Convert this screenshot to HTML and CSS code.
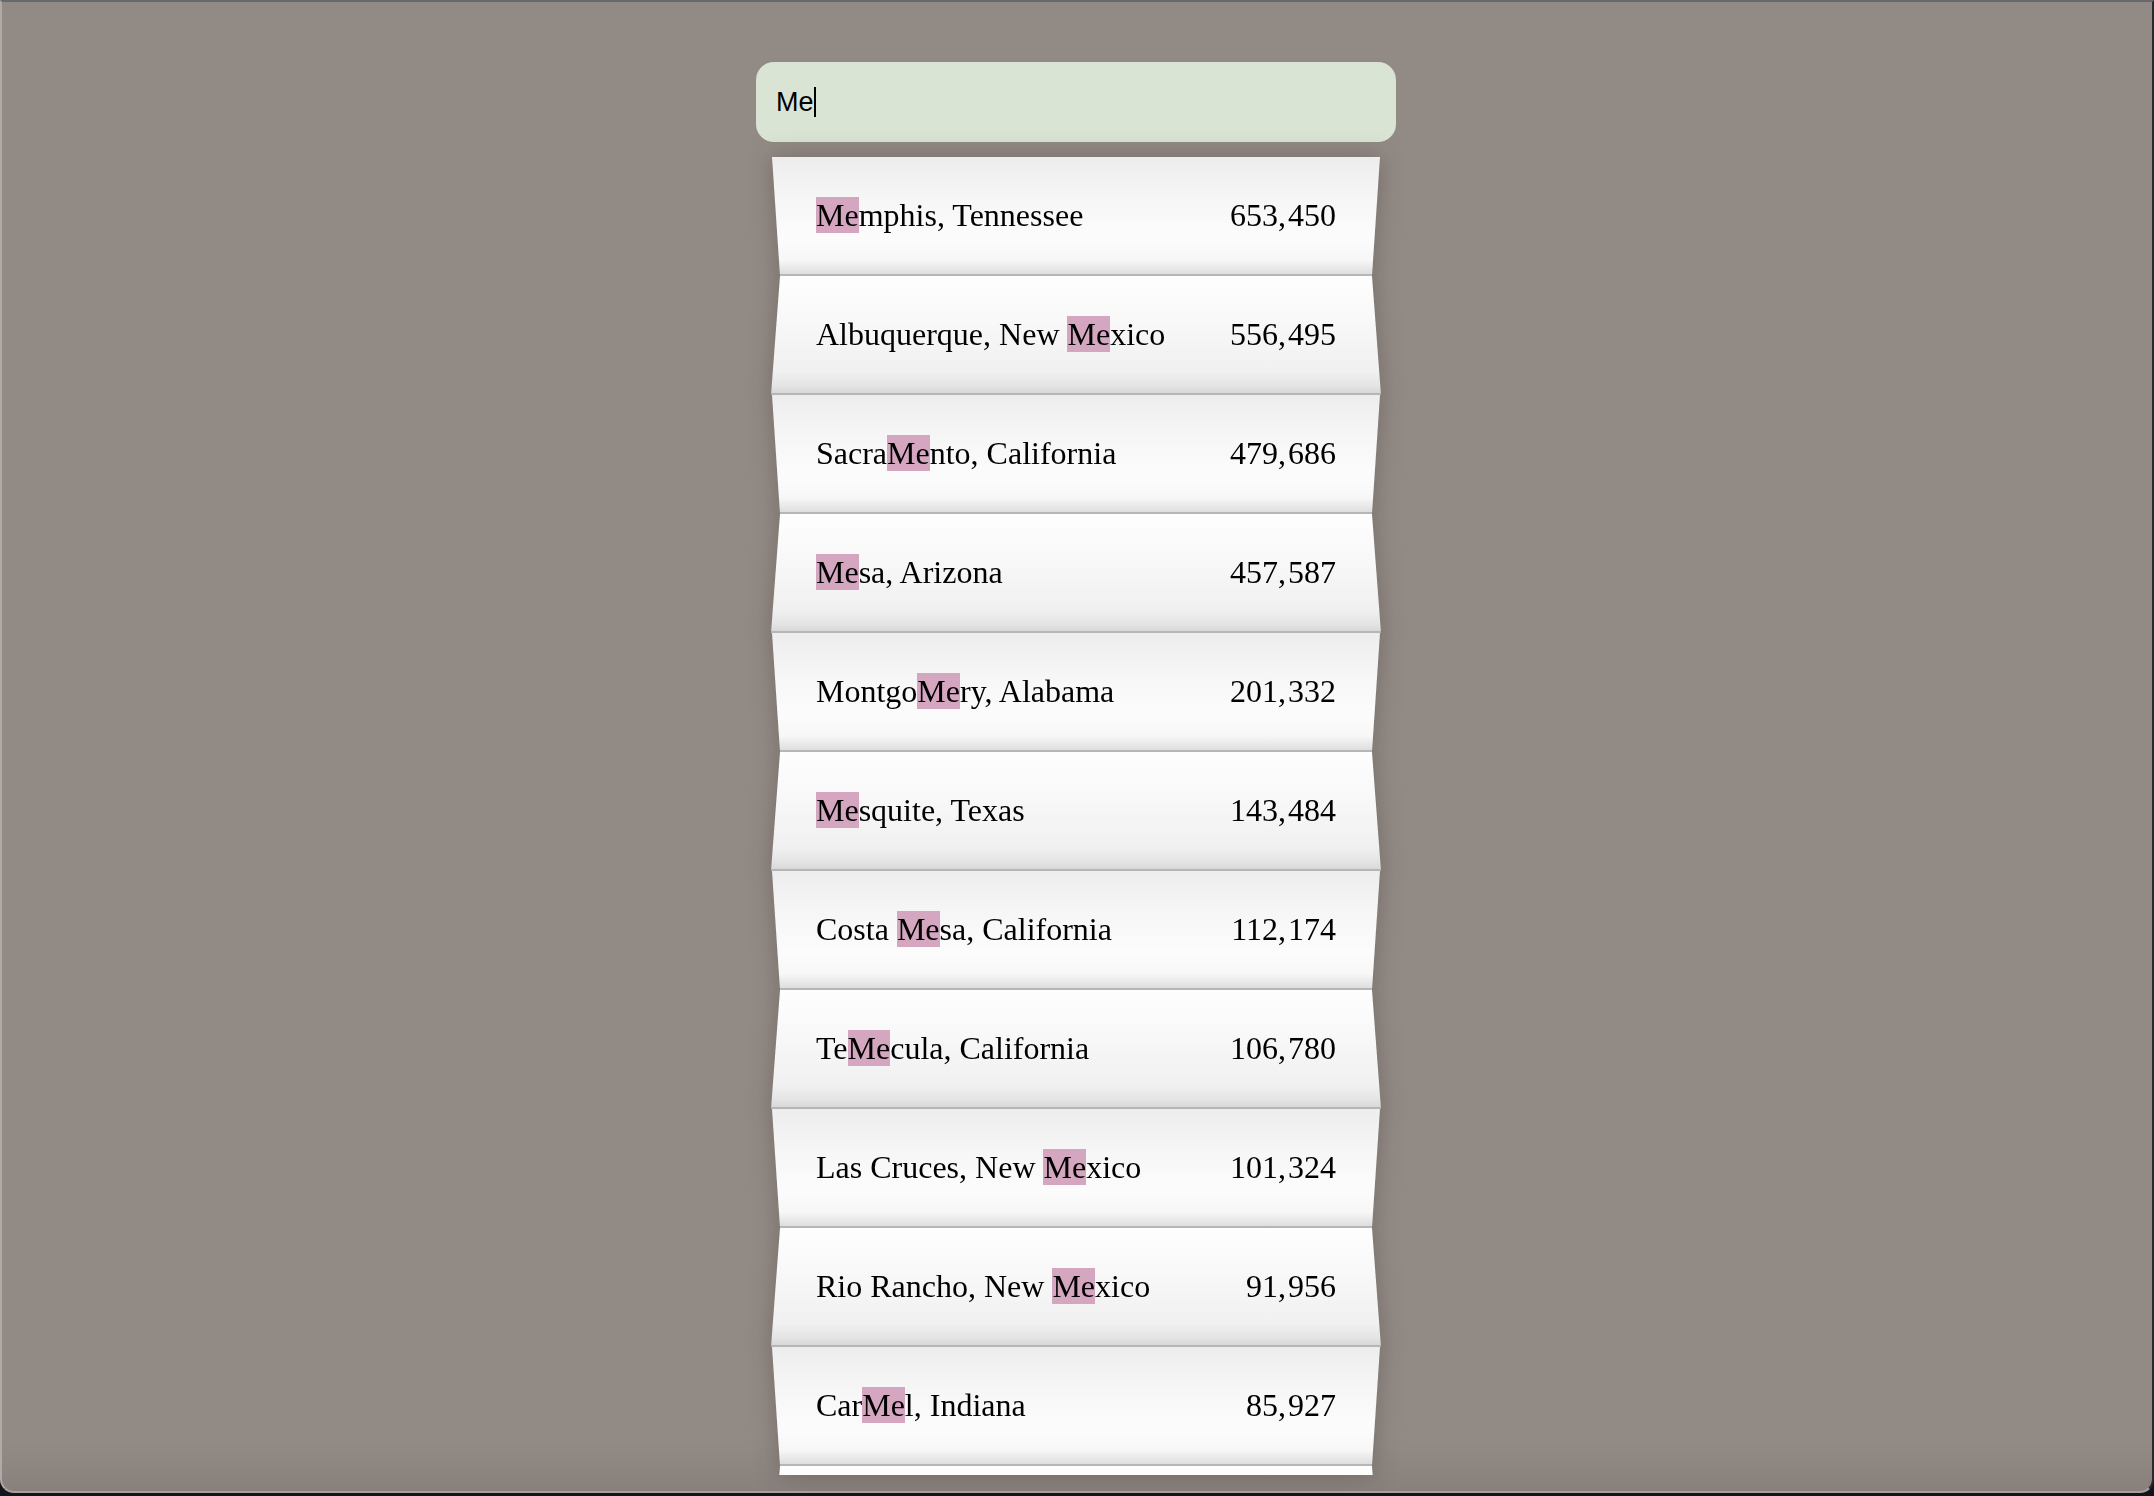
FILE: index.html
```html
<!DOCTYPE html>
<html lang="en">
<head>
<meta charset="utf-8">
<title>City search</title>
<link rel="stylesheet" href="styles.css">
</head>
<body>
<div class="window">
  <main class="search">
    <div class="search-box"><span class="query">Me</span><span class="caret"></span></div>
    <div class="results-wrap">
      <ul class="results">
        <li class="row"><span class="name"><mark>Me</mark>mphis, Tennessee</span><span class="pop">653, 450</span></li>
        <li class="row"><span class="name">Albuquerque, New <mark>Me</mark>xico</span><span class="pop">556, 495</span></li>
        <li class="row"><span class="name">Sacra<mark>Me</mark>nto, California</span><span class="pop">479, 686</span></li>
        <li class="row"><span class="name"><mark>Me</mark>sa, Arizona</span><span class="pop">457, 587</span></li>
        <li class="row"><span class="name">Montgo<mark>Me</mark>ry, Alabama</span><span class="pop">201, 332</span></li>
        <li class="row"><span class="name"><mark>Me</mark>squite, Texas</span><span class="pop">143, 484</span></li>
        <li class="row"><span class="name">Costa <mark>Me</mark>sa, California</span><span class="pop">112, 174</span></li>
        <li class="row"><span class="name">Te<mark>Me</mark>cula, California</span><span class="pop">106, 780</span></li>
        <li class="row"><span class="name">Las Cruces, New <mark>Me</mark>xico</span><span class="pop">101, 324</span></li>
        <li class="row"><span class="name">Rio Rancho, New <mark>Me</mark>xico</span><span class="pop">91, 956</span></li>
        <li class="row"><span class="name">Car<mark>Me</mark>l, Indiana</span><span class="pop">85, 927</span></li>
        <li class="row row-hidden" aria-hidden="true"></li>
      </ul>
    </div>
  </main>
</div>
</body>
</html>
```

FILE: styles.css
```css
html {
  background: #14141c;
}
body {
  margin: 0;
  height: 1496px;
  overflow: hidden;
}
.window {
  box-sizing: border-box;
  height: 1493px;
  padding-right: 2px;
  background: linear-gradient(to bottom, rgba(0,0,0,0) 0, rgba(0,0,0,0) 1440px, rgba(0,0,0,0.07) 100%), #928a85;
  border-top: 2px solid #66686c;
  border-left: 2px solid #b1a9a5;
  border-right: 2px solid #2a2a2e;
  border-bottom: 2px solid #a8a09c;
  border-radius: 0 0 14px 14px;
  overflow: hidden;
}
.search {
  width: 640px;
  margin: 0 auto;
  padding-top: 60px;
  display: flex;
  flex-direction: column;
  align-items: center;
}
.search-box {
  box-sizing: border-box;
  width: 640px;
  height: 80px;
  border-radius: 18px;
  background: #d9e4d5;
  display: flex;
  align-items: center;
  padding: 0 20px;
  font-family: "Liberation Sans", Arial, sans-serif;
  font-size: 27px;
  color: #000;
}
.caret {
  display: inline-block;
  width: 2px;
  height: 30px;
  background: #000;
}
.results-wrap {
  margin-top: 15px;
  width: 610px;
  filter: drop-shadow(0 0 12px rgba(40, 30, 25, 0.28));
}
.results {
  list-style: none;
  margin: 0;
  padding: 0;
  height: 1318px;
  overflow: hidden;
}
.row {
  box-sizing: border-box;
  height: 119px;
  padding: 0 45px;
  display: flex;
  justify-content: space-between;
  align-items: center;
  font-family: "Liberation Serif", "Times New Roman", serif;
  font-size: 32px;
  color: #000;
  border-bottom: 2px solid #b6b6b6;
}
.pop {
  word-spacing: -6px;
}
.row:nth-child(odd) {
  clip-path: polygon(1px 0, calc(100% - 1px) 0, calc(100% - 9px) 100%, 9px 100%);
  background: linear-gradient(to bottom, #ededed 0%, #f6f6f6 35%, #fcfcfc 70%, #f7f7f7 88%, #dedede 100%);
}
.row:nth-child(even) {
  clip-path: polygon(9px 0, calc(100% - 9px) 0, 100% 100%, 0 100%);
  background: linear-gradient(to bottom, #fefefe 0%, #f8f8f8 40%, #f0f0f0 82%, #e4e4e4 94%, #d8d8d8 100%);
}
mark {
  background: #d5a6c0;
  color: #000;
}
```
